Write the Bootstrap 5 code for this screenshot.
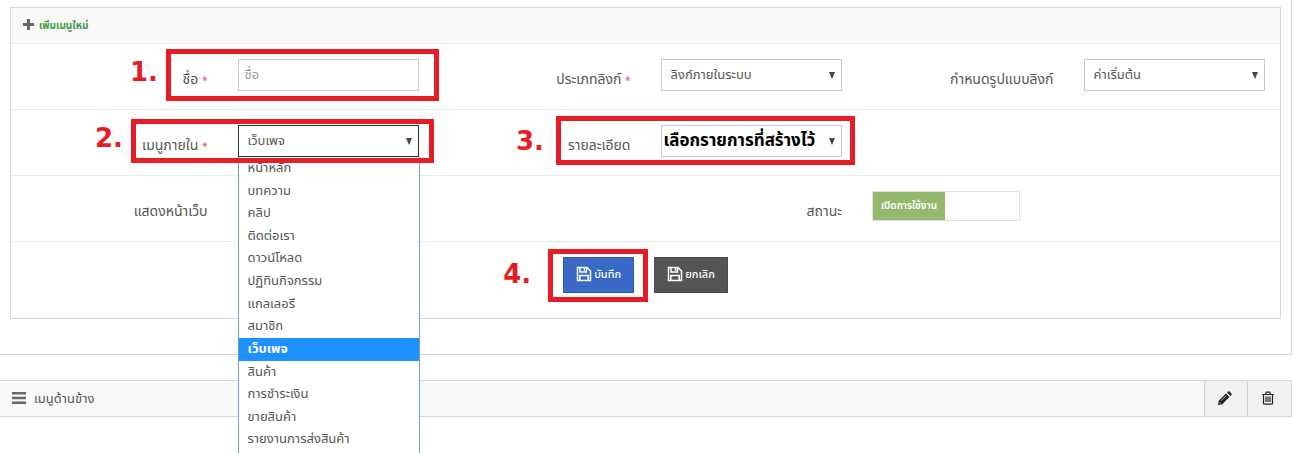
<!DOCTYPE html>
<html lang="th">
<head>
<meta charset="utf-8">
<meta name="viewport" content="width=device-width, initial-scale=1">
<title>จัดการเมนู</title>
<link rel="stylesheet" href="https://cdn.jsdelivr.net/npm/bootstrap@5.3.0/dist/css/bootstrap.min.css">
<style>
  body { font: 14px/20px "Noto Sans Thai", "Noto Sans", "Liberation Sans", sans-serif; color: #555; background: #fff; min-height: 100vh; overflow: hidden; }
  .outer-panel { border: 1px solid #d3d3d3; border-width: 0 1px 1px 0; padding: 7px 10px 35px; margin-right: 1px; }
  .inner-panel { border: 1px solid #d6d6d6; }
  .panel-title { height: 35px; background: #f9f9f9; gap: 5px; padding: 0 12px; }
  .panel-title h2 { font-size: 10px; line-height: 20px; font-weight: 700; color: #3f9a3f; margin: 0; }
  .form-line { border-top: 1px solid #e9ecec; height: 66px; }
  .actions-line { height: 77px; padding-top: 15px; }
  .cell { padding: 15px 15px 0; }
  .cell-label { padding: 26px 15px 0; text-align: right; white-space: nowrap; }
  .req { color: #d9534f; font-size: 10px; }
  .box-input { border: 1px solid #c8c8c8; border-radius: 0; height: 32px; padding: 0 6px; font-size: 13px; line-height: 30px; color: #555; background-color: #fff; box-shadow: none; }
  .box-input::placeholder { color: #999; }
  select.box-input { padding: 0 20px 0 9px; background: #fff url("data:image/svg+xml,%3Csvg xmlns='http://www.w3.org/2000/svg' width='6' height='7'%3E%3Cpath d='M0 0h6L3 7z' fill='%23444'/%3E%3C/svg%3E") no-repeat right 6px center; }
  select.box-open { border-color: #263340; }
  select.box-strong { font-size: 17px; font-weight: 700; color: #000; padding-left: 2px; padding-right: 0; }
  .options { position: absolute; z-index: 2; top: 47px; left: 15px; right: 14px; height: 299px; margin: 0; padding: 0 0 4px; list-style: none; display: grid; grid-auto-rows: 1fr; background: #fff; border: 1px solid #7b9ac0; border-top-width: 0; font-size: 13px; line-height: 22px; }
  .options li { padding: 0 9px; white-space: nowrap; }
  .options .picked { background: #1e90ff; color: #fff; font-weight: 700; }
  .callout { position: absolute; z-index: 3; border: 5px solid #e81c24; pointer-events: none; }
  .callout b { position: absolute; right: 100%; top: 50%; line-height: 28px; margin: -17px 13px 0 0; font-family: "DejaVu Sans", sans-serif; font-size: 26px; color: #e81c24; }
  .callout-name { left: 155px; right: -5px; top: 5px; height: 52px; }
  .callout-inner { left: 120px; right: 0; top: 9px; height: 44px; }
  .callout-detail { left: 122px; right: 2px; top: 6px; height: 49px; }
  .callout-save { left: -15px; right: -14px; top: -8px; bottom: -9px; }
  .callout-detail b { margin-top: -14px; margin-right: 17px; }
  .callout-save b { margin-top: -16px; margin-right: 22px; }
  .switch { width: 148px; height: 30px; border: 1px solid #e2e2e2; }
  .switch span { width: 72px; background: #94b86e; color: #fff; font-size: 10px; font-weight: 600; line-height: 28px; text-align: center; white-space: nowrap; }
  .act { height: 36px; border-radius: 0; border: 1px solid #3159ae; background: #3968c6; color: #fff; font-size: 11px; font-weight: 500; line-height: 20px; padding: 0 12px; gap: 2px; }
  .act svg { margin-bottom: 2px; }
  .act-dark { background: #555; border-color: #4a4a4a; }
  .side-bar { margin: 25px 1px 0 0; height: 37px; border: 1px solid #d6d6d6; border-left: 0; background: #f9f9f9; font-size: 13px; }
  .tool { width: 43px; border: 0; border-left: 1px solid #d0d0d0; background: #f1f1f1; color: #222; padding: 0 3px 0 0; }
  .tool:last-child { width: 44px; }
</style>
</head>
<body>
<main>
  <section class="outer-panel">
    <form class="inner-panel">
      <div class="panel-title d-flex align-items-center">
        <svg width="11" height="14" viewBox="0 0 11 14" fill="#666"><path d="M4 0h3v4h4v3H7v4H4V7H0V4h4z"/></svg>
        <h2>เพิ่มเมนูใหม่</h2>
      </div>

      <div class="form-line row g-0">
        <div class="col-4 position-relative">
          <div class="row g-0">
            <label class="col-6 cell-label" for="name">ชื่อ <span class="req">*</span></label>
            <div class="col-6 cell"><input id="name" class="form-control box-input" type="text" placeholder="ชื่อ"></div>
          </div>
          <div class="callout callout-name"><b>1.</b></div>
        </div>
        <div class="col-4">
          <div class="row g-0">
            <label class="col-6 cell-label" for="type">ประเภทลิงก์ <span class="req">*</span></label>
            <div class="col-6 cell"><select id="type" class="form-select box-input"><option>ลิงก์ภายในระบบ</option></select></div>
          </div>
        </div>
        <div class="col-4">
          <div class="row g-0">
            <label class="col-6 cell-label" for="target">กำหนดรูปแบบลิงก์</label>
            <div class="col-6 cell"><select id="target" class="form-select box-input"><option>ค่าเริ่มต้น</option></select></div>
          </div>
        </div>
      </div>

      <div class="form-line row g-0">
        <div class="col-4 position-relative">
          <div class="row g-0">
            <label class="col-6 cell-label" for="inner">เมนูภายใน <span class="req">*</span></label>
            <div class="col-6 cell position-relative">
              <select id="inner" class="form-select box-input box-open"><option>เว็บเพจ</option></select>
              <ul class="options" role="listbox" aria-label="เมนูภายใน">
                <li role="option">หน้าหลัก</li>
                <li role="option">บทความ</li>
                <li role="option">คลิป</li>
                <li role="option">ติดต่อเรา</li>
                <li role="option">ดาวน์โหลด</li>
                <li role="option">ปฏิทินกิจกรรม</li>
                <li role="option">แกลเลอรี</li>
                <li role="option">สมาชิก</li>
                <li role="option" aria-selected="true" class="picked">เว็บเพจ</li>
                <li role="option">สินค้า</li>
                <li role="option">การชำระเงิน</li>
                <li role="option">ขายสินค้า</li>
                <li role="option">รายงานการส่งสินค้า</li>
              </ul>
            </div>
          </div>
          <div class="callout callout-inner"><b>2.</b></div>
        </div>
        <div class="col-4 position-relative">
          <div class="row g-0">
            <label class="col-6 cell-label" for="detail">รายละเอียด</label>
            <div class="col-6 cell"><select id="detail" class="form-select box-input box-strong"><option>เลือกรายการที่สร้างไว้</option></select></div>
          </div>
          <div class="callout callout-detail"><b>3.</b></div>
        </div>
      </div>

      <div class="form-line row g-0">
        <div class="col-2 cell-label">แสดงหน้าเว็บ</div>
        <div class="col-2 offset-4 cell-label">สถานะ</div>
        <div class="col-4 cell">
          <div class="switch d-flex"><span>เปิดการใช้งาน</span></div>
        </div>
      </div>

      <div class="form-line actions-line d-flex justify-content-center align-items-start">
        <div class="position-relative me-3">
          <button type="button" class="btn act d-flex align-items-center">
            <svg width="16" height="16" viewBox="0 0 16 16" fill="none" stroke="#fff" stroke-width="1.500"><path d="M1.500 1.500h9.500l3.500 3.500v9.500h-13zM4 1.500v4.500h6.500V1.500M3.800 14.500V9.500h8.400v5M8.500 2v2.800"/></svg>
            บันทึก
          </button>
          <div class="callout callout-save"><b>4.</b></div>
        </div>
        <button type="button" class="btn act act-dark d-flex align-items-center ms-1">
          <svg width="16" height="16" viewBox="0 0 16 16" fill="none" stroke="#fff" stroke-width="1.500"><path d="M1.500 1.500h9.500l3.500 3.500v9.500h-13zM4 1.500v4.500h6.500V1.500M3.800 14.500V9.500h8.400v5M8.500 2v2.800"/></svg>
          ยกเลิก
        </button>
      </div>
    </form>
  </section>

  <section class="side-bar d-flex">
    <div class="d-flex align-items-center flex-grow-1 gap-2 ps-2 ms-1">
      <svg width="14" height="16" viewBox="0 0 14 16" fill="#666"><path d="M0 1h14v2.500H0zM0 5.800h14v2.500H0zM0 10.600h14v2.500H0z"/></svg>
      <span>เมนูด้านข้าง</span>
    </div>
    <button type="button" class="tool" aria-label="แก้ไข">
      <svg width="14" height="16" viewBox="0 0 14 16" fill="currentColor"><path d="M8 2.500l3.500 3.500-7.300 7.300L0 14l.7-4.200zM9 1.600l1-1q.8-.7 1.600 0l1.800 1.800q.7.800 0 1.600l-1 1z"/><path d="M3 9.800l5-5" stroke="#f1f1f1" stroke-width=".7"/><path d="M1.300 11.500l1.200 1.200" stroke="#f1f1f1"/></svg>
    </button>
    <button type="button" class="tool" aria-label="ลบ">
      <svg width="14" height="16" viewBox="0 0 14 16" fill="none" stroke="currentColor" stroke-width="1.200"><path d="M1 3.500h12M4.500 3.500l.7-2.400h3.600l.7 2.400M2.500 3.500v8.400q0 1.300 1.200 1.300h6.600q1.200 0 1.200-1.300V3.500M5 5.500v5.500M7 5.500v5.500M9 5.500v5.500"/></svg>
    </button>
  </section>
</main>
<script src="https://cdn.jsdelivr.net/npm/bootstrap@5.3.0/dist/js/bootstrap.bundle.min.js"></script>
</body>
</html>
